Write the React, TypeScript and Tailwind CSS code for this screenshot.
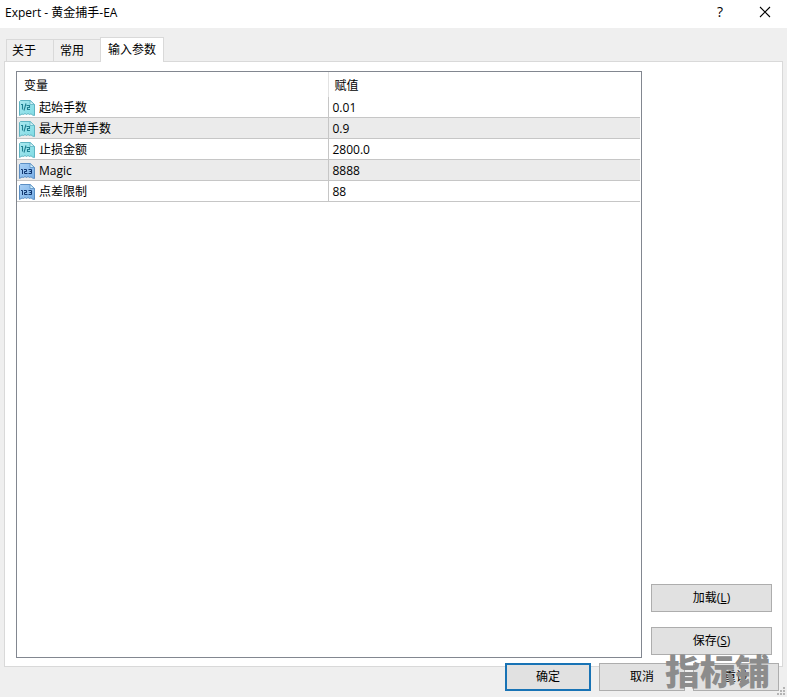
import React from 'react';

type Param = { name: string; value: string; kind: 'double' | 'int' };

const params: Param[] = [
  { name: '起始手数', value: '0.01', kind: 'double' },
  { name: '最大开单手数', value: '0.9', kind: 'double' },
  { name: '止损金额', value: '2800.0', kind: 'double' },
  { name: 'Magic', value: '8888', kind: 'int' },
  { name: '点差限制', value: '88', kind: 'int' },
];

// Torn-paper icon: teal for doubles, blue for integers
const TypeIcon = ({ kind }: { kind: Param['kind'] }) => {
  const isDouble = kind === 'double';
  const edge = isDouble ? '#5fb4c2' : '#5b8fc4';
  const ink = isDouble ? '#1f7f90' : '#0f356e';
  return (
    <svg width="16" height="16" viewBox="0 0 16 16" fill="none" className="shrink-0" aria-hidden="true">
      <defs>
        <linearGradient id={kind} x1="0" y1="0" x2="1" y2="1">
          <stop offset="0" stopColor={isDouble ? '#a9e8ef' : '#a9d0f5'} />
          <stop offset="1" stopColor={isDouble ? '#7fdbe4' : '#77aee6'} />
        </linearGradient>
      </defs>
      <path
        d="M1.5 .5H11L15.5 4.5V15.5L13.5 15L12 13.8L10.5 14.5L9 13.5L7.5 14.5L6 13.5L4.5 14.5L3 14L.5 15.5V1.5Z"
        fill={`url(#${kind})`}
        stroke={edge}
      />
      <path d="M11 .5V4.5H15.5Z" fill="#d6f3fa" stroke={edge} strokeWidth=".8" />
      {isDouble ? (
        <path d="M2 4.5H3.5V9.5M7 3.5L5 10.5M7.5 5.5H10.5V7.5H8.5V9.5H11" stroke={ink} strokeWidth="1.1" />
      ) : (
        <path d="M2 6.5H3.5V11M5 6.5H7.5V8.5H5.5V10.5H8.5M9.5 6.5H12.5V10.5H9.5M10.5 8.5H12.5" stroke={ink} />
      )}
    </svg>
  );
};

const App = () => {
  return (
    <div className="relative flex min-h-screen flex-col bg-[#efefef] font-['Open_Sans','Noto_Sans_CJK_SC',sans-serif] text-xs leading-4 text-black">
      <header className="flex h-7 items-center justify-between bg-white pl-[5px] pr-4">
        <h1 className="pb-0.5">Expert - 黄金捕手-EA</h1>
        <div className="flex items-center gap-[33px] pb-1">
          <button type="button" aria-label="Help" className="w-3 text-sm leading-4">?</button>
          <button type="button" aria-label="Close">
            <svg width="12" height="12" viewBox="0 0 12 12" stroke="#000" strokeWidth="1.1" aria-hidden="true">
              <path d="M1 1L11 11M11 1L1 11" />
            </svg>
          </button>
        </div>
      </header>

      <nav role="tablist" className="z-10 -mb-px flex items-end pl-1.5 pt-[9px]">
        <button type="button" role="tab" aria-selected="false" className="h-[23px] w-12 border border-[#d9d9d9] pl-[5px] text-left">
          关于
        </button>
        <button type="button" role="tab" aria-selected="false" className="-ml-px h-[23px] w-12 border border-[#d9d9d9] pl-1.5 text-left">
          常用
        </button>
        <button type="button" role="tab" aria-selected="true" className="-ml-px h-[25px] w-16 border border-b-0 border-[#d9d9d9] bg-white pl-[7px] text-left">
          输入参数
        </button>
      </nav>

      <main className="mx-1 flex flex-1 gap-[9px] border border-[#d9d9d9] bg-white pt-[9px] pb-2 pl-[11px] pr-2.5">
        <div className="flex-1 border border-[#828790] bg-white pr-px">
          <table className="w-full table-fixed border-separate border-spacing-0">
            <thead>
              <tr className="h-[25px]">
                <th scope="col" className="border-r border-[#e2e2e2] p-0 pl-[7px] pt-0.5 text-left font-normal">变量</th>
                <th scope="col" className="p-0 pl-1.5 pt-0.5 text-left font-normal">赋值</th>
              </tr>
            </thead>
            <tbody>
              {params.map((p) => (
                <tr key={p.name} className="h-[21px] even:bg-[#ebebeb]">
                  <td className="border-r border-b border-[#c6c6c6] p-0 pt-0.5 pl-0.5">
                    <div className="flex items-center gap-1">
                      <TypeIcon kind={p.kind} />
                      {p.name}
                    </div>
                  </td>
                  <td className="border-b border-[#c6c6c6] p-0 pt-0.5 pl-1">{p.value}</td>
                </tr>
              ))}
            </tbody>
          </table>
        </div>
        <div className="flex w-[121px] flex-col justify-end gap-[15px] pb-[3px]">
          <button type="button" className="h-7 border border-[#adadad] bg-[#e1e1e1]">加载(<u>L</u>)</button>
          <button type="button" className="h-7 border border-[#adadad] bg-[#e1e1e1]">保存(<u>S</u>)</button>
        </div>
      </main>

      <footer className="z-10 -mt-1 flex justify-end gap-2 pb-1.5 pr-2">
        <button type="button" className="h-7 w-[86px] border-2 border-[#1873b5] bg-[#e1e1e1]">确定</button>
        <button type="button" className="h-7 w-[86px] border border-[#adadad] bg-[#e1e1e1]">取消</button>
        <button type="button" className="h-7 w-[86px] border border-[#adadad] bg-[#e1e1e1]">重设</button>
      </footer>

      {/* Watermark */}
      <div className="pointer-events-none absolute right-[17px] bottom-[7px] z-20 text-[35px] leading-9 font-black text-[#8c8c8c]">
        指标铺
      </div>

      {/* Resize grip */}
      <svg className="absolute right-0 bottom-0 z-20" width="10" height="10" viewBox="0 0 10 10" fill="#b4b4b4" aria-hidden="true">
        <path d="M6 0h2v2h-2zM3 3h2v2h-2zM6 3h2v2h-2zM0 6h2v2h-2zM3 6h2v2h-2zM6 6h2v2h-2z" />
      </svg>
    </div>
  );
};

export default App;
